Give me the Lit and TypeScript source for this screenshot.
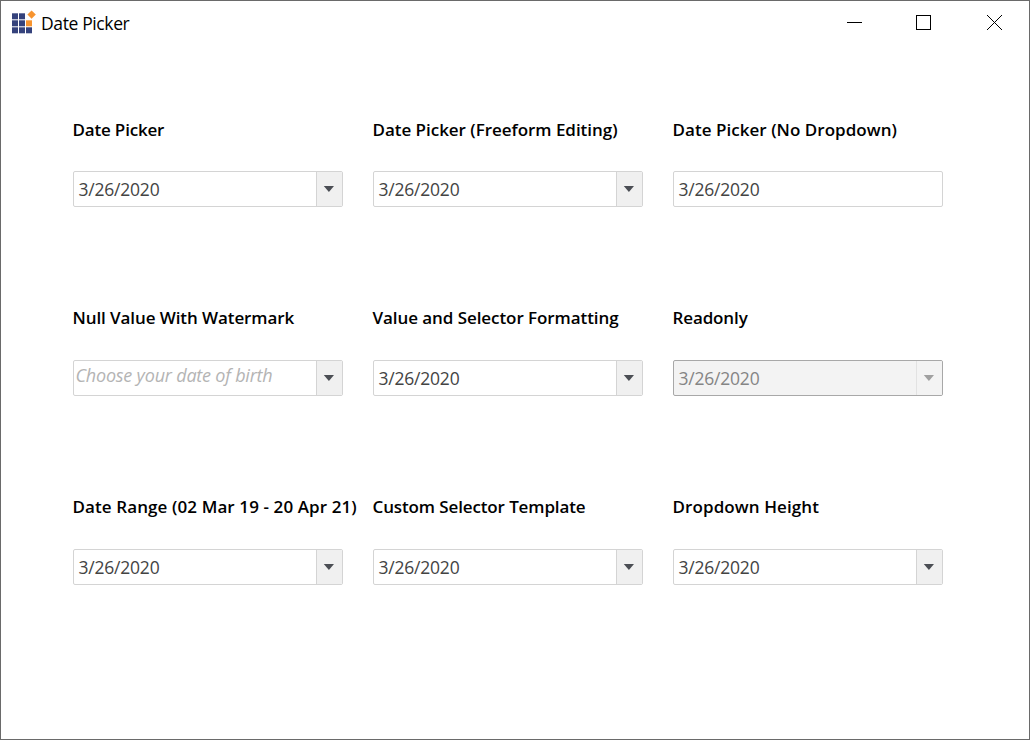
import { LitElement, html, css, svg, nothing } from "lit";
import { customElement, property } from "lit/decorators.js";
import { classMap } from "lit/directives/class-map.js";
import { styleMap } from "lit/directives/style-map.js";

interface PickerItem {
  label: string;
  tracking: number;
  value?: string;
  watermark?: string;
  noDropdown?: boolean;
  readonly?: boolean;
  firstRow?: boolean;
}

const DATE = "3/26/2020";

const ITEMS: PickerItem[] = [
  { label: "Date Picker", tracking: -0.18, value: DATE, firstRow: true },
  { label: "Date Picker (Freeform Editing)", tracking: -0.03, value: DATE, firstRow: true },
  { label: "Date Picker (No Dropdown)", tracking: 0.04, value: DATE, noDropdown: true, firstRow: true },
  { label: "Null Value With Watermark", tracking: -0.09, watermark: "Choose your date of birth" },
  { label: "Value and Selector Formatting", tracking: -0.07, value: DATE },
  { label: "Readonly", tracking: -0.12, value: DATE, readonly: true },
  { label: "Date Range (02 Mar 19 - 20 Apr 21)", tracking: 0.1, value: DATE },
  { label: "Custom Selector Template", tracking: -0.12, value: DATE },
  { label: "Dropdown Height", tracking: 0.1, value: DATE },
];

@customElement("date-field")
class DateField extends LitElement {
  @property({ attribute: false }) item!: PickerItem;

  static styles = css`
    :host {
      display: flex;
      flex-direction: column;
      width: 270px;
    }
    .label {
      height: 26px;
      line-height: 26px;
      margin: 0 0 29px -0.5px;
      font-size: 17px;
      font-weight: 600;
      color: #000;
      white-space: nowrap;
    }
    .label.first {
      line-height: 28px;
    }
    .box {
      display: flex;
      box-sizing: border-box;
      height: 36px;
      border: 1px solid #d4d4d4;
      border-radius: 2px;
      background: #fff;
      overflow: hidden;
    }
    .value {
      flex: 1;
      padding-left: 4.4px;
      font-size: 17.5px;
      line-height: 35px;
      letter-spacing: -0.2px;
      color: #444;
      white-space: nowrap;
    }
    .watermark {
      padding-left: 1.4px;
      font-size: 18px;
      line-height: 29px;
      font-style: italic;
      color: #b4b4b4;
    }
    .drop {
      width: 25px;
      border-left: 1px solid #d4d4d4;
      background: #f0f0f0;
      color: #4b4e54;
    }
    .drop svg {
      display: block;
    }
    .readonly {
      border-color: #a8a8a8;
      background: #f3f3f3;
    }
    .readonly .value {
      color: #858585;
    }
    .readonly .drop {
      border-color: #e2e2e2;
      background: #f3f3f3;
      color: #a0a0a0;
    }
  `;

  render() {
    const i = this.item;
    return html`
      <div
        class=${classMap({ label: true, first: !!i.firstRow })}
        style=${styleMap({ letterSpacing: `${i.tracking}px` })}
      >${i.label}</div>
      <div class=${classMap({ box: true, readonly: !!i.readonly })}>
        <div class=${classMap({ value: true, watermark: !!i.watermark })}>${i.watermark ?? i.value}</div>
        ${i.noDropdown
          ? nothing
          : html`<div class="drop">
              <svg width="25" height="34" viewBox="0 0 25 34">
                <path d="M6.8 14h10.2l-5.1 6z" fill="currentColor" />
              </svg>
            </div>`}
      </div>
    `;
  }
}

@customElement("app-root")
class AppRoot extends LitElement {
  static styles = css`
    :host {
      display: flex;
      flex-direction: column;
      box-sizing: border-box;
      width: 1030px;
      height: 740px;
      border: 1px solid #6a6a6a;
      background: #fff;
      font-family: "Open Sans", "Noto Sans", sans-serif;
      overflow: hidden;
    }
    .titlebar {
      display: flex;
      height: 44px;
    }
    .logo {
      width: 40px;
      height: 44px;
    }
    .title {
      flex: 1;
      font-size: 17.5px;
      line-height: 45px;
      letter-spacing: -0.38px;
      color: #000;
    }
    .controls {
      width: 210px;
      height: 44px;
    }
    .grid {
      display: grid;
      grid-template-columns: repeat(3, 270px);
      column-gap: 30px;
      grid-auto-rows: 189px;
      padding: 71px 0 0 72px;
    }
  `;

  render() {
    const cells = [0, 1, 2].flatMap((r) =>
      [0, 1, 2]
        .filter((c) => !(r === 0 && c === 2))
        .map(
          (c) => svg`<rect x=${11 + c * 7} y=${12.3 + r * 7} width="6" height="6"
            fill=${r === 1 && c === 2 ? "#f7942f" : "#35427c"} />`,
        ),
    );
    return html`
      <div class="titlebar">
        <svg class="logo" viewBox="0 0 40 44">
          ${cells}
          <path d="M30.6 9.4l4.2 4.2-4.2 4.2-4.2-4.2z" fill="#f7942f" />
        </svg>
        <div class="title">Date Picker</div>
        <svg class="controls" viewBox="0 0 210 44" fill="none" stroke="#000">
          <path d="M28 21.5h15" />
          <rect x="97.5" y="14.5" width="14" height="14" />
          <path d="M168 14l15 15M183 14l-15 15" />
        </svg>
      </div>
      <div class="grid">
        ${ITEMS.map((item) => html`<date-field .item=${item}></date-field>`)}
      </div>
    `;
  }
}
